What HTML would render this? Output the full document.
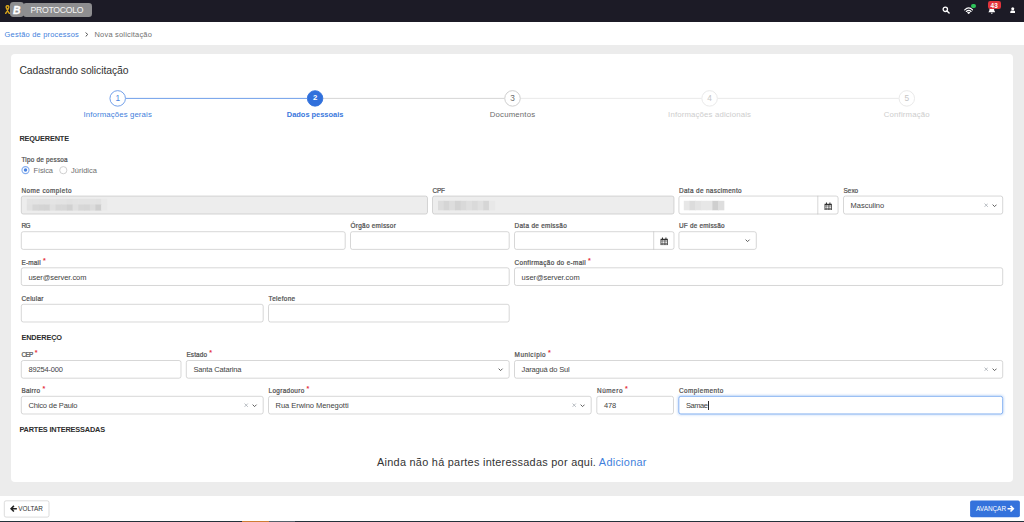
<!DOCTYPE html>
<html lang="pt-BR">
<head>
<meta charset="utf-8">
<title>Nova solicitação</title>
<style>
*{box-sizing:border-box;margin:0;padding:0}
html,body{width:1024px;height:522px;overflow:hidden;background:#ececec}
body{position:relative;font-family:"Liberation Sans",sans-serif;color:#444;font-size:7.47px}
.abs,.t,.in,.lb,.v,.hd{position:absolute}
.t,.lb,.v,.hd{white-space:nowrap;line-height:10px}
#top{left:0;top:0;width:1024px;height:22px;background:#1c1b26}
#crumb{left:0;top:22px;width:1024px;height:23px;background:#fff}
#card{left:11.2px;top:54px;width:1001.8px;height:428.4px;background:#fff;border-radius:4px}
#foot{left:0;top:496px;width:1024px;height:24.6px;background:#fff}
#strip{left:0;top:520.5px;width:1024px;height:1.5px;background:#24313b}
.blue{color:#3f7fdc}
/* labels */
.lb{font-size:6.4px;font-weight:normal;color:#505050;-webkit-text-stroke:0.22px #505050}
.lb i{font-style:normal;color:#e5343d;font-weight:bold;-webkit-text-stroke:0;position:relative;top:-1.8px;left:2px;font-size:7px}
.hd{font-size:7.47px;font-weight:bold;color:#2d2d2d}
/* inputs */
.in{height:18.2px}
.v{font-size:7.5px;color:#424242;left:7.4px;top:5px}
.cal{position:absolute;right:5.9px;top:5.8px;width:8.4px;height:8.6px}
.chev{position:absolute;width:5.2px;height:3.4px;right:6px;top:7.9px}
.x{position:absolute;width:4.4px;height:4.4px;right:14.9px;top:7px}
/* steps */
.st{position:absolute;width:16.4px;height:16.4px;top:89.8px;text-align:center;line-height:16.4px;font-size:8.3px}
.sl{position:absolute;top:109.8px;width:140px;text-align:center;line-height:10px;font-size:7.47px;white-space:nowrap}
.btn{position:absolute;top:500.6px;height:17px;font-size:6.4px;line-height:16.4px;white-space:nowrap}
</style>
</head>
<body>
<div id="top" class="abs"></div>
<div id="crumb" class="abs"></div>
<div id="card" class="abs"></div>
<div id="foot" class="abs"></div>
<div id="strip" class="abs"></div>
<!-- header -->
<svg class="abs" style="left:4.8px;top:4.6px;width:5px;height:9.2px" viewBox="0 0 10 18"><path d="M5 1.2C2.6 1.2 1.8 3.4 2.8 5.6L6.6 13.4 8.6 16.6M5 1.2C7.4 1.2 8.2 3.4 7.2 5.6L3.4 13.4 1.4 16.6" fill="none" stroke="#d6a31c" stroke-width="2.9" stroke-linecap="round"/></svg>
<div class="abs" style="left:10px;top:2.2px;width:13.6px;height:14.4px;border-radius:3.4px;background:#8e8e90"></div>
<div class="abs" style="left:22.6px;top:3px;width:69px;height:14px;border-radius:3.2px;background:#8e8e90"></div>
<span class="t" style="left:12.9px;top:6.2px;font-size:10.4px;font-weight:bold;font-style:italic;color:#fff;-webkit-text-stroke:0.35px #fff">B</span>
<span class="t" style="left:30.4px;top:5.1px;font-size:8.7px;color:#f4f4f4;letter-spacing:-0.27px">PROTOCOLO</span>
<!-- search -->
<svg class="abs" style="left:941.8px;top:6.2px;width:8px;height:8px" viewBox="0 0 16 16"><circle cx="6.6" cy="6.6" r="4.4" fill="none" stroke="#fff" stroke-width="2.6"/><path d="M10 10l4.2 4.2" stroke="#fff" stroke-width="2.8" stroke-linecap="round"/></svg>
<!-- wifi -->
<svg class="abs" style="left:963.9px;top:6.8px;width:9.4px;height:7.2px" viewBox="0 0 26 20"><path d="M2 8.2C8.6 1.6 17.4 1.6 24 8.2" fill="none" stroke="#fff" stroke-width="3.3" stroke-linecap="round"/><path d="M6.4 12.4c4-4 9.2-4 13.2 0" fill="none" stroke="#fff" stroke-width="3.3" stroke-linecap="round"/><path d="M10.2 16c1.8-1.7 3.8-1.7 5.6 0" fill="none" stroke="#fff" stroke-width="3" stroke-linecap="round"/><circle cx="13" cy="18" r="1.7" fill="#fff"/></svg>
<div class="abs" style="left:971.2px;top:3.5px;width:4.7px;height:4.7px;border-radius:50%;background:#2fc45a"></div>
<!-- bell -->
<svg class="abs" style="left:987.6px;top:6.4px;width:7.6px;height:8.2px" viewBox="0 0 16 17"><path d="M8 .8c-.8 0-1.3.5-1.3 1.2C4.200 2.700 3.100 4.700 3.100 7.200c0 2.700-.9 4.300-2.600 5.600h15c-1.700-1.300-2.600-2.900-2.600-5.600 0-2.500-1.100-4.500-3.600-5.200C9.300 1.300 8.800.8 8 .8z" fill="#fff"/><path d="M6 14h4a2 2 0 0 1-4 0z" fill="#fff"/></svg>
<div class="abs" style="left:988px;top:1.2px;width:12.5px;height:8px;border-radius:2.2px;background:#e2343c"></div>
<span class="t" style="left:990.6px;top:0.8px;font-size:6.4px;font-weight:bold;color:#fff">43</span>
<!-- user -->
<svg class="abs" style="left:1009.7px;top:6.6px;width:5.5px;height:6.9px" viewBox="0 0 12 15"><circle cx="6" cy="3.8" r="3.3" fill="#fff"/><path d="M.6 14.400V10.800C.6 8.600 2.400 7.400 4 7.400h4c1.600 0 3.400 1.200 3.400 3.400v3.600z" fill="#fff"/></svg>
<!-- breadcrumb -->
<span class="t blue" style="left:4.6px;top:30.2px;font-size:7.47px;letter-spacing:0.2px">Gestão de processos</span>
<svg class="abs" style="left:84.6px;top:32.2px;width:3.4px;height:5px" viewBox="0 0 6.800 10"><path d="M1.400 1l4 4-4 4" fill="none" stroke="#3c3c3c" stroke-width="1.900"/></svg>
<span class="t" style="left:94.5px;top:30.2px;font-size:7.47px;color:#707070;letter-spacing:0.2px">Nova solicitação</span>


<svg class="abs" style="left:0;top:0;width:1024px;height:522px" viewBox="0 0 1024 522" fill="none"><defs><filter id="gl" x="-5%" y="-50%" width="110%" height="200%"><feGaussianBlur stdDeviation="0.8"/></filter></defs>
<path d="M125.8 98.4H307.0" stroke="#5f93e6" stroke-width="0.9"/>
<path d="M323.2 98.4H504.4" stroke="#d0d0d0" stroke-width="0.9"/>
<path d="M520.6 98.4H701.5" stroke="#e7e7e7" stroke-width="0.9"/>
<path d="M717.7 98.4H898.7" stroke="#e7e7e7" stroke-width="0.9"/>
<circle cx="117.7" cy="98.4" r="7.75" fill="#fff" stroke="#5a8fe5" stroke-width="0.85"/>
<circle cx="315.1" cy="98.4" r="7.75" fill="#3070dc" stroke="#3070dc" stroke-width="0.85"/>
<circle cx="512.5" cy="98.4" r="7.75" fill="#fff" stroke="#c6c6c6" stroke-width="0.85"/>
<circle cx="709.6" cy="98.4" r="7.75" fill="#fff" stroke="#e5e5e5" stroke-width="0.85"/>
<circle cx="906.8" cy="98.4" r="7.75" fill="#fff" stroke="#e5e5e5" stroke-width="0.85"/>
<circle cx="25.5" cy="170.1" r="3.55" fill="#fff" stroke="#86aeee" stroke-width="1.15"/><circle cx="25.5" cy="170.1" r="1.75" fill="#4a84e2"/>
<circle cx="63.3" cy="170.2" r="3.6" fill="#fff" stroke="#cbcbcb" stroke-width="0.9"/>
<rect x="21.31" y="196.06" width="406.18" height="17.98" rx="2" fill="#ededed" stroke="#bebebe" stroke-width="0.62"/>
<rect x="432.51" y="196.06" width="241.48" height="17.98" rx="2" fill="#ededed" stroke="#bebebe" stroke-width="0.62"/>
<rect x="678.91" y="196.06" width="159.18" height="17.98" rx="2" fill="#fff" stroke="#bebebe" stroke-width="0.62"/>
<path d="M817.80 195.75v18.6" stroke="#bebebe" stroke-width="0.62"/>
<rect x="843.51" y="196.06" width="159.18" height="17.98" rx="2" fill="#fff" stroke="#bebebe" stroke-width="0.62"/>
<rect x="26.80" y="198.90" width="6.22" height="6.10" fill="#e3e3e3"/>
<rect x="32.52" y="198.90" width="6.22" height="6.10" fill="#e3e3e3"/>
<rect x="38.24" y="198.90" width="6.22" height="6.10" fill="#e2e2e2"/>
<rect x="43.96" y="198.90" width="6.22" height="6.10" fill="#e2e2e2"/>
<rect x="49.68" y="198.90" width="6.22" height="6.10" fill="#e4e4e4"/>
<rect x="55.40" y="198.90" width="6.22" height="6.10" fill="#e3e3e3"/>
<rect x="61.12" y="198.90" width="6.22" height="6.10" fill="#e3e3e3"/>
<rect x="66.84" y="198.90" width="6.22" height="6.10" fill="#e1e1e1"/>
<rect x="72.56" y="198.90" width="6.22" height="6.10" fill="#e3e3e3"/>
<rect x="78.28" y="198.90" width="6.22" height="6.10" fill="#e3e3e3"/>
<rect x="84.00" y="198.90" width="6.22" height="6.10" fill="#e3e3e3"/>
<rect x="89.72" y="198.90" width="6.22" height="6.10" fill="#e3e3e3"/>
<rect x="95.44" y="198.90" width="6.22" height="6.10" fill="#e2e2e2"/>
<rect x="101.16" y="198.90" width="6.22" height="6.10" fill="#e9e9e9"/>
<rect x="26.80" y="204.50" width="6.22" height="6.10" fill="#e1e1e1"/>
<rect x="32.52" y="204.50" width="6.22" height="6.10" fill="#d6d6d6"/>
<rect x="38.24" y="204.50" width="6.22" height="6.10" fill="#d4d4d4"/>
<rect x="43.96" y="204.50" width="6.22" height="6.10" fill="#d3d3d3"/>
<rect x="49.68" y="204.50" width="6.22" height="6.10" fill="#e0e0e0"/>
<rect x="55.40" y="204.50" width="6.22" height="6.10" fill="#d7d7d7"/>
<rect x="61.12" y="204.50" width="6.22" height="6.10" fill="#d7d7d7"/>
<rect x="66.84" y="204.50" width="6.22" height="6.10" fill="#d1d1d1"/>
<rect x="72.56" y="204.50" width="6.22" height="6.10" fill="#e0e0e0"/>
<rect x="78.28" y="204.50" width="6.22" height="6.10" fill="#d7d7d7"/>
<rect x="84.00" y="204.50" width="6.22" height="6.10" fill="#d6d6d6"/>
<rect x="89.72" y="204.50" width="6.22" height="6.10" fill="#dcdcdc"/>
<rect x="95.44" y="204.50" width="6.22" height="6.10" fill="#cecece"/>
<rect x="101.16" y="204.50" width="6.22" height="6.10" fill="#e9e9e9"/>
<rect x="438.00" y="200.80" width="6.16" height="9.50" fill="#dcdcdc"/>
<rect x="443.66" y="200.80" width="6.16" height="9.50" fill="#d5d5d5"/>
<rect x="449.32" y="200.80" width="6.16" height="9.50" fill="#dddddd"/>
<rect x="454.98" y="200.80" width="6.16" height="9.50" fill="#d3d3d3"/>
<rect x="460.64" y="200.80" width="6.16" height="9.50" fill="#d9d9d9"/>
<rect x="466.30" y="200.80" width="6.16" height="9.50" fill="#dfdfdf"/>
<rect x="471.96" y="200.80" width="6.16" height="9.50" fill="#dadada"/>
<rect x="477.62" y="200.80" width="6.16" height="9.50" fill="#e0e0e0"/>
<rect x="483.28" y="200.80" width="6.16" height="9.50" fill="#d6d6d6"/>
<rect x="488.94" y="200.80" width="6.16" height="9.50" fill="#e8e8e8"/>
<rect x="683.80" y="200.80" width="6.22" height="9.50" fill="#e7e7e7"/>
<rect x="689.52" y="200.80" width="6.22" height="9.50" fill="#dcdcdc"/>
<rect x="695.24" y="200.80" width="6.22" height="9.50" fill="#e3e3e3"/>
<rect x="700.96" y="200.80" width="6.22" height="9.50" fill="#e7e7e7"/>
<rect x="706.68" y="200.80" width="6.22" height="9.50" fill="#e7e7e7"/>
<rect x="712.40" y="200.80" width="6.22" height="9.50" fill="#cfcfcf"/>
<rect x="718.12" y="200.80" width="6.22" height="9.50" fill="#dedede"/>
<rect x="21.31" y="231.71" width="323.88" height="17.68" rx="2" fill="#fff" stroke="#bebebe" stroke-width="0.62"/>
<rect x="350.51" y="231.71" width="158.68" height="17.68" rx="2" fill="#fff" stroke="#bebebe" stroke-width="0.62"/>
<rect x="514.51" y="231.71" width="159.48" height="17.68" rx="2" fill="#fff" stroke="#bebebe" stroke-width="0.62"/>
<path d="M653.70 231.40v18.3" stroke="#bebebe" stroke-width="0.62"/>
<rect x="678.91" y="231.71" width="77.38" height="17.68" rx="2" fill="#fff" stroke="#bebebe" stroke-width="0.62"/>
<rect x="21.31" y="267.81" width="487.88" height="17.68" rx="2" fill="#fff" stroke="#bebebe" stroke-width="0.62"/>
<rect x="514.51" y="267.81" width="488.18" height="17.68" rx="2" fill="#fff" stroke="#bebebe" stroke-width="0.62"/>
<rect x="21.31" y="304.31" width="241.88" height="17.68" rx="2" fill="#fff" stroke="#bebebe" stroke-width="0.62"/>
<rect x="268.51" y="304.31" width="240.68" height="17.68" rx="2" fill="#fff" stroke="#bebebe" stroke-width="0.62"/>
<rect x="21.31" y="360.51" width="159.68" height="17.68" rx="2" fill="#fff" stroke="#bebebe" stroke-width="0.62"/>
<rect x="186.31" y="360.51" width="322.88" height="17.68" rx="2" fill="#fff" stroke="#bebebe" stroke-width="0.62"/>
<rect x="514.51" y="360.51" width="488.18" height="17.68" rx="2" fill="#fff" stroke="#bebebe" stroke-width="0.62"/>
<rect x="21.31" y="396.31" width="241.88" height="17.68" rx="2" fill="#fff" stroke="#bebebe" stroke-width="0.62"/>
<rect x="268.51" y="396.31" width="322.68" height="17.68" rx="2" fill="#fff" stroke="#bebebe" stroke-width="0.62"/>
<rect x="596.81" y="396.31" width="76.68" height="17.68" rx="2" fill="#fff" stroke="#bebebe" stroke-width="0.62"/>
<rect x="678.80" y="396.30" width="323.90" height="17.70" rx="2" fill="#fff" stroke="#7eaef0" stroke-width="2.4" opacity="0.4" filter="url(#gl)"/>
<rect x="678.85" y="396.35" width="323.80" height="17.60" rx="2" fill="#fff" stroke="#5c97ec" stroke-width="0.7"/>
<rect x="4.3" y="500.8" width="44.700" height="16.300" rx="1.800" fill="#fff" stroke="#c4c4c4" stroke-width="0.6"/>
<rect x="970.1" y="500.6" width="49.800" height="16.700" rx="1.800" fill="#3472dc"/>
</svg>
<span class="t" style="left:19.4px;top:63.6px;line-height:13px;font-size:10.4px;letter-spacing:-0.083px;color:#333">Cadastrando solicitação</span>
<div class="st" style="left:109.5px;color:#4a86e0">1</div>
<div class="st" style="left:306.9px;color:#fff;font-weight:bold;font-size:7.8px">2</div>
<div class="st" style="left:504.3px;color:#6a6a6a">3</div>
<div class="st" style="left:701.4px;color:#c6c6c6">4</div>
<div class="st" style="left:898.6px;color:#c6c6c6">5</div>
<div class="sl" style="left:47.7px;color:#3f7fdc"><span style="font-size:7.8px;letter-spacing:0.121px">Informações gerais</span></div>
<div class="sl" style="left:245.1px;color:#3a78dd;font-weight:bold"><span style="font-size:7.47px;letter-spacing:-0.027px">Dados pessoais</span></div>
<div class="sl" style="left:442.5px;color:#6c6c6c"><span style="font-size:7.8px;letter-spacing:0.172px">Documentos</span></div>
<div class="sl" style="left:639.6px;color:#cdcdcd"><span style="font-size:7.8px;letter-spacing:0.148px">Informações adicionais</span></div>
<div class="sl" style="left:836.8px;color:#cdcdcd"><span style="font-size:7.8px;letter-spacing:0.163px">Confirmação</span></div>
<span class="hd" style="left:19.4px;top:133.5px;font-size:7.35px;letter-spacing:-0.152px">REQUERENTE</span>
<span class="hd" style="left:21.4px;top:333.2px;font-size:7.35px;letter-spacing:-0.141px">ENDEREÇO</span>
<span class="hd" style="left:19.4px;top:425.2px;font-size:7.35px;letter-spacing:-0.175px">PARTES INTERESSADAS</span>
<span class="lb" style="left:21.4px;top:155.0px"><span style="font-size:6.4px;letter-spacing:0.216px">Tipo de pessoa</span></span>
<span class="t" style="left:33.4px;top:165.6px;color:#6e6e6e;font-size:7.47px;letter-spacing:-0.070px">Física</span>
<span class="t" style="left:71px;top:165.6px;color:#6e6e6e;font-size:7.47px;letter-spacing:0.031px">Júridica</span>
<span class="lb" style="left:21.4px;top:186.0px"><span style="font-size:6.4px;letter-spacing:0.441px">Nome completo</span></span>
<span class="lb" style="left:432.6px;top:186.0px"><span style="font-size:6.4px;letter-spacing:-0.266px">CPF</span></span>
<span class="lb" style="left:679px;top:186.0px"><span style="font-size:6.4px;letter-spacing:0.342px">Data de nascimento</span></span>
<span class="lb" style="left:843.6px;top:186.0px"><span style="font-size:6.4px;letter-spacing:0.006px">Sexo</span></span>
<div class="in" style="left:678.6px;top:195.75px;width:159.8px"><svg class="cal" viewBox="0 0 16 16"><path d="M1 3.2h14v12H1z" fill="#333"/><path d="M3.700.6h2v3.800h-2zM10.300.6h2v3.800h-2z" fill="#333"/><path d="M2.600 6.200h2.400v2h-2.400zM5.900 6.200h2v2h-2zM8.800 6.200h2v2h-2zM11.700 6.200h1.900v2h-1.900zM2.600 9.100h2.400v2h-2.400zM5.900 9.100h2v2h-2zM8.800 9.100h2v2h-2zM11.700 9.100h1.900v2h-1.900zM2.600 12h2.400v2h-2.400zM5.900 12h2v2h-2zM8.800 12h2v2h-2zM11.700 12h1.900v2h-1.900z" fill="#fff"/></svg></div>
<div class="in" style="left:843.2px;top:195.75px;width:159.8px"><span class="v" style="font-size:7.5px;letter-spacing:-0.030px">Masculino</span><svg class="x" viewBox="0 0 8 8"><path d="M1 1l6 6M7 1l-6 6" fill="none" stroke="#a8aeb4" stroke-width="1.500"/></svg><svg class="chev" viewBox="0 0 10 6.500"><path d="M1.200 1.200l3.800 3.800 3.800-3.800" fill="none" stroke="#5a5a5a" stroke-width="1.900"/></svg></div>
<span class="lb" style="left:21.4px;top:221.3px"><span style="font-size:6.4px;letter-spacing:-0.422px">RG</span></span>
<span class="lb" style="left:350.6px;top:221.3px"><span style="font-size:6.4px;letter-spacing:0.275px">Órgão emissor</span></span>
<span class="lb" style="left:514.6px;top:221.3px"><span style="font-size:6.4px;letter-spacing:0.302px">Data de emissão</span></span>
<span class="lb" style="left:679px;top:221.3px"><span style="font-size:6.4px;letter-spacing:0.213px">UF de emissão</span></span>
<div class="in" style="left:514.2px;top:231.4px;width:160.1px"><svg class="cal" viewBox="0 0 16 16"><path d="M1 3.2h14v12H1z" fill="#333"/><path d="M3.700.6h2v3.800h-2zM10.300.6h2v3.800h-2z" fill="#333"/><path d="M2.600 6.200h2.400v2h-2.400zM5.900 6.200h2v2h-2zM8.800 6.200h2v2h-2zM11.700 6.200h1.900v2h-1.900zM2.600 9.100h2.400v2h-2.400zM5.900 9.100h2v2h-2zM8.800 9.100h2v2h-2zM11.700 9.100h1.900v2h-1.900zM2.600 12h2.400v2h-2.400zM5.900 12h2v2h-2zM8.800 12h2v2h-2zM11.700 12h1.900v2h-1.900z" fill="#fff"/></svg></div>
<div class="in" style="left:678.6px;top:231.4px;width:78.0px"><svg class="chev" viewBox="0 0 10 6.500"><path d="M1.200 1.200l3.800 3.800 3.800-3.800" fill="none" stroke="#5a5a5a" stroke-width="1.900"/></svg></div>
<span class="lb" style="left:21.4px;top:257.6px"><span style="font-size:6.4px;letter-spacing:0.232px">E-mail</span><i>*</i></span>
<span class="lb" style="left:514.6px;top:257.6px"><span style="font-size:6.4px;letter-spacing:0.343px">Confirmação do e-mail</span><i>*</i></span>
<div class="in" style="left:21px;top:267.5px;width:488.5px"><span class="v" style="font-size:7.5px;letter-spacing:-0.059px">user@server.com</span></div>
<div class="in" style="left:514.2px;top:267.5px;width:488.8px"><span class="v" style="font-size:7.5px;letter-spacing:-0.059px">user@server.com</span></div>
<span class="lb" style="left:21.4px;top:293.6px"><span style="font-size:6.4px;letter-spacing:0.286px">Celular</span></span>
<span class="lb" style="left:268.6px;top:293.6px"><span style="font-size:6.4px;letter-spacing:0.341px">Telefone</span></span>
<span class="lb" style="left:21.4px;top:349.7px"><span style="font-size:6.4px;letter-spacing:-0.630px">CEP</span><i>*</i></span>
<span class="lb" style="left:186.4px;top:349.7px"><span style="font-size:6.4px;letter-spacing:0.141px">Estado</span><i>*</i></span>
<span class="lb" style="left:514.6px;top:349.7px"><span style="font-size:6.4px;letter-spacing:0.460px">Município</span><i>*</i></span>
<div class="in" style="left:21px;top:360.2px;width:160.3px"><span class="v" style="font-size:7.5px;letter-spacing:-0.153px">89254-000</span></div>
<div class="in" style="left:186px;top:360.2px;width:323.5px"><span class="v" style="font-size:7.5px;letter-spacing:-0.146px">Santa Catarina</span><svg class="chev" viewBox="0 0 10 6.500"><path d="M1.200 1.200l3.800 3.800 3.800-3.800" fill="none" stroke="#5a5a5a" stroke-width="1.900"/></svg></div>
<div class="in" style="left:514.2px;top:360.2px;width:488.8px"><span class="v" style="font-size:7.5px;letter-spacing:-0.175px">Jaraguá do Sul</span><svg class="x" viewBox="0 0 8 8"><path d="M1 1l6 6M7 1l-6 6" fill="none" stroke="#a8aeb4" stroke-width="1.500"/></svg><svg class="chev" viewBox="0 0 10 6.500"><path d="M1.200 1.200l3.800 3.800 3.800-3.800" fill="none" stroke="#5a5a5a" stroke-width="1.900"/></svg></div>
<span class="lb" style="left:21.4px;top:385.8px"><span style="font-size:6.4px;letter-spacing:0.323px">Bairro</span><i>*</i></span>
<span class="lb" style="left:268.6px;top:385.8px"><span style="font-size:6.4px;letter-spacing:0.330px">Logradouro</span><i>*</i></span>
<span class="lb" style="left:597px;top:385.8px"><span style="font-size:6.4px;letter-spacing:0.544px">Número</span><i>*</i></span>
<span class="lb" style="left:679px;top:385.8px"><span style="font-size:6.4px;letter-spacing:0.446px">Complemento</span></span>
<div class="in" style="left:21px;top:396.0px;width:242.5px"><span class="v" style="font-size:7.5px;letter-spacing:-0.134px">Chico de Paulo</span><svg class="x" viewBox="0 0 8 8"><path d="M1 1l6 6M7 1l-6 6" fill="none" stroke="#a8aeb4" stroke-width="1.500"/></svg><svg class="chev" viewBox="0 0 10 6.500"><path d="M1.200 1.200l3.800 3.800 3.800-3.800" fill="none" stroke="#5a5a5a" stroke-width="1.900"/></svg></div>
<div class="in" style="left:268.2px;top:396.0px;width:323.3px"><span class="v" style="font-size:7.5px;letter-spacing:-0.040px">Rua Erwino Menegotti</span><svg class="x" viewBox="0 0 8 8"><path d="M1 1l6 6M7 1l-6 6" fill="none" stroke="#a8aeb4" stroke-width="1.500"/></svg><svg class="chev" viewBox="0 0 10 6.500"><path d="M1.200 1.200l3.800 3.800 3.800-3.800" fill="none" stroke="#5a5a5a" stroke-width="1.900"/></svg></div>
<div class="in" style="left:596.5px;top:396.0px;width:77.3px"><span class="v" style="font-size:7.5px;letter-spacing:-0.172px">478</span></div>
<div class="in" style="left:678.5px;top:396.0px;width:324.5px"><span class="v" style="font-size:7.5px;letter-spacing:-0.403px">Samae</span><span class="abs" style="left:29.4px;top:4.800px;width:0.55px;height:8.800px;background:#2a2a2a"></span></div>
<span class="t" style="left:377px;top:456px;line-height:13px;font-size:10.9px;letter-spacing:0.273px;color:#333">Ainda não há partes interessadas por aqui. <span class="blue">Adicionar</span></span>
<div class="btn" style="left:4px;width:45.200px;color:#333"><svg style="position:absolute;left:6.200px;top:4.7px;width:7.400px;height:7.400px" viewBox="0 0 14 14"><path d="M13 7H3M7.400 1.600L2 7l5.400 5.400" fill="none" stroke="#222" stroke-width="3"/></svg><span class="abs" style="left:14.2px;top:0.4px;font-size:6.4px;letter-spacing:0.029px">VOLTAR</span></div>
<div class="btn" style="left:970.1px;width:49.800px;color:#fff"><svg style="position:absolute;right:5.200px;top:4.7px;width:7.400px;height:7.400px" viewBox="0 0 14 14"><path d="M1 7h10M6.600 1.600L12 7l-5.400 5.400" fill="none" stroke="#fff" stroke-width="3"/></svg><span class="abs" style="left:6px;top:0.4px;font-size:6.4px;letter-spacing:-0.008px">AVANÇAR</span></div>
<div class="abs" style="left:242px;top:520.5px;width:26.500px;height:1.500px;background:#cf7d33"></div>
<div class="abs" style="left:268.500px;top:520.5px;width:26.500px;height:1.500px;background:#56616b"></div>

</body>
</html>
